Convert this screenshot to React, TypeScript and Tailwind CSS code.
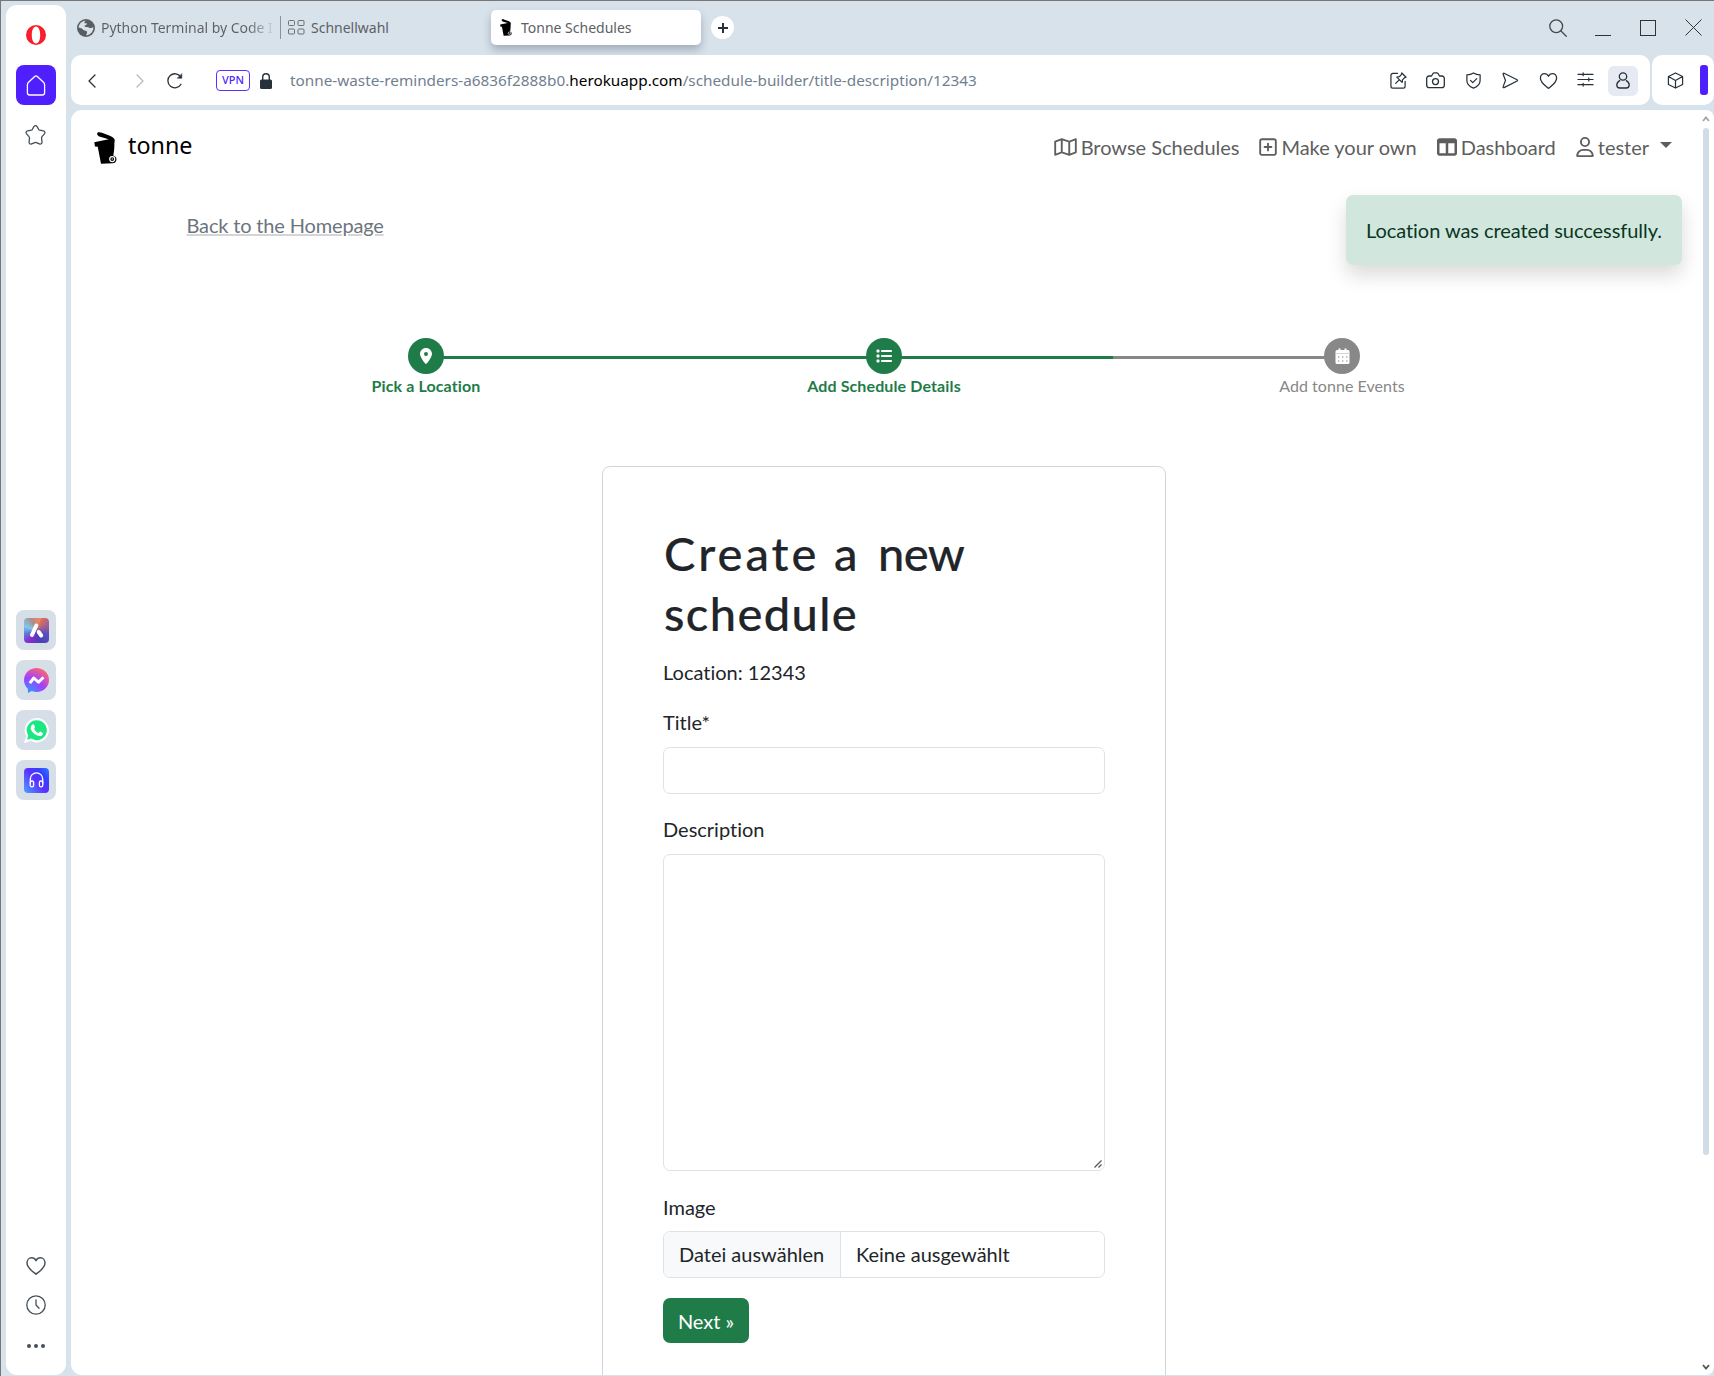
import React from "react";
import {
  FaRegMap,
  FaRegSquarePlus,
  FaTableColumns,
  FaRegUser,
  FaLocationDot,
  FaList,
} from "react-icons/fa6";

function BinIcon({ className }: { className: string }) {
  return (
    <svg viewBox="0 0 24 33" className={className} fill="currentColor">
      <path d="M3.600.600C5-.2 7 .2 9 .9l7.500 2.800c3 1.200 5 2.600 5.200 4.800L21.200 12c.3 4-.4 8-1 12.500a4 4 0 0 1 3.200 4.200c-.2 2.400-2 3.700-4 3.700L7.300 33 3.900 15.200 1 15 .3 10.400l15-3L5.500 4.500C3.600 3.900 2.800 1.800 3.600.600Z" />
      <circle cx="19" cy="28" r="2.600" fill="none" stroke="#fff" strokeWidth="1.300" />
      <circle cx="19" cy="28" r="0.700" fill="#fff" />
    </svg>
  );
}

function CalendarIcon() {
  return (
    <svg viewBox="0 0 15 16" className="h-4 w-[15px]">
      <path fill="#fff" d="M3.500.5h2V2h4V.5h2V2H13a1.500 1.500 0 0 1 1.500 1.500v11A1.500 1.500 0 0 1 13 16H2a1.500 1.500 0 0 1-1.500-1.500v-11A1.500 1.500 0 0 1 2 2h1.500Z" />
      <path stroke="#d6d6d6" d="M.5 5.500h14" />
      <path stroke="#777" strokeWidth="1.200" strokeDasharray="1.200 2.900" d="M3 9h9.500M3 13h9.500" />
    </svg>
  );
}

function Line({ children, className = "size-[18px]", box = "0 0 18 18" }: { children: React.ReactNode; className?: string; box?: string }) {
  return (
    <svg viewBox={box} className={className} fill="none" stroke="currentColor" strokeWidth="1.3" strokeLinecap="round" strokeLinejoin="round">
      {children}
    </svg>
  );
}

const heart = "M9 16.300C6.500 14.200.9 10.800.9 6.200.9 3.300 2.900 1.600 5 1.600c1.800 0 3.200 1 4 2.600.8-1.600 2.200-2.600 4-2.600 2.100 0 4.100 1.700 4.100 4.600 0 4.600-5.600 8-8.100 10.100Z";

function Sidebar() {
  return (
    <aside className="flex w-[60px] shrink-0 flex-col items-center rounded-[11px] bg-white text-[#454f5a]">
      <svg viewBox="0 0 20 20" className="mt-5 size-5">
        <path fillRule="evenodd" fill="#fa1e2d" d="M10 0a10 10 0 1 0 0 20 10 10 0 0 0 0-20Zm0 1.500c2.600 0 4.200 3.600 4.200 8.500s-1.600 8.500-4.200 8.500S5.800 14.900 5.800 10 7.400 1.500 10 1.500Z" />
      </svg>
      <div className="mt-5 flex size-10 items-center justify-center rounded-lg bg-[#4f1fff] text-white">
        <Line className="h-[21px] w-5" box="0 0 20 21">
          <path d="M2.500 7.200 8.700 1.500c.8-.7 1.800-.7 2.600 0l6.200 5.700c.7.700 1.100 1.500 1.100 2.500v8a2.300 2.300 0 0 1-2.300 2.300H3.700a2.300 2.300 0 0 1-2.300-2.300v-8c0-1 .4-1.800 1.100-2.500Z" />
        </Line>
      </div>
      <Line className="mt-5 mr-px h-5 w-[21px]" box="0 0 21 20">
        <path d="M8.900 1.600c.7-1.200 2.500-1.200 3.200 0l1.500 2.700c.3.500.7.800 1.200.9l3.600.7c1.500.3 2 1.900 1 3l-2.400 2.700c-.3.400-.5.900-.4 1.400l.4 4c.1 1.500-1.200 2.500-2.600 1.900l-3.100-1.300c-.5-.2-1-.2-1.500 0l-3.200 1.300c-1.400.6-2.700-.4-2.500-1.900l.4-4c0-.5-.1-1-.5-1.400L1.600 8.900c-1-1.100-.5-2.700 1-3l3.600-.7c.5-.1.900-.4 1.200-.9Z" />
      </Line>

      <div className="mt-[465px] flex flex-col gap-2.5">
        <div className="flex size-10 items-center justify-center rounded-lg bg-[#d6dfe8]">
          <div className="flex size-[25px] items-center justify-center rounded bg-[conic-gradient(from_20deg,#e0705f,#5a4fc0_25%,#4b3fb8_40%,#8a2bd0_55%,#5a7be0_65%,#7ccbe8_75%,#b08a90_88%,#f08a55)]">
            <svg viewBox="0 0 25 25" className="size-[25px]" stroke="#fff" strokeLinecap="round" fill="none">
              <path strokeWidth="4" d="M12.300 7.500 8 17" />
              <path strokeWidth="4" d="m14.700 14 2.500 3.500" />
            </svg>
          </div>
        </div>
        <div className="flex size-10 items-center justify-center rounded-lg bg-[#d6dfe8]">
          <svg viewBox="0 0 25 25" className="size-[25px]">
            <defs>
              <radialGradient id="msg" cx="0.2" cy="1" r="1.1">
                <stop offset="0" stopColor="#2f9bff" />
                <stop offset="0.550" stopColor="#a040ff" />
                <stop offset="1" stopColor="#ff6670" />
              </radialGradient>
            </defs>
            <path fill="url(#msg)" d="M12.500 0C5.500 0 0 5.100 0 12c0 3.600 1.500 6.700 3.900 8.900V25l3.900-2.100c1.500.7 3 1.100 4.700 1.100 7 0 12.500-5.100 12.500-12S19.500 0 12.500 0Z" />
            <path fill="none" stroke="#fff" strokeWidth="3" strokeLinejoin="round" d="m5.800 15.200 4-5.200 4.700 4.200 5-5" />
          </svg>
        </div>
        <div className="flex size-10 items-center justify-center rounded-lg bg-[#d6dfe8]">
          <svg viewBox="0 0 25 25" className="size-[25px]">
            <path fill="#fff" d="M12.800 0a12.200 12.200 0 0 0-10.600 18.200L0 25l7-2A12.200 12.200 0 1 0 12.800 0Z" />
            <path fill="#1de782" d="M12.800 2.200A10 10 0 0 0 4.300 17.500l-1.200 4.200 4.300-1.100A10 10 0 1 0 12.800 2.200Z" />
            <path fill="#fff" d="M8.500 6.500c.5-.4 1.300-.3 1.500.3l1 2.300c.2.500-.8 1.500-.9 1.900 1 2 2.500 3.300 4.500 4.100.5-.3 1.100-1.600 1.600-1.500l2.600 1.300c.3.600 0 2-.9 2.600-1.500 1-3.300.7-5.300-.2-3.200-1.500-5.700-4.700-5.900-7 0-1.600.8-3 1.800-3.800Z" />
          </svg>
        </div>
        <div className="flex size-10 items-center justify-center rounded-lg bg-[#d6dfe8]">
          <div className="flex size-[25px] items-center justify-center rounded bg-[linear-gradient(50deg,#4ba3ff,#5a2fff_50%,#3540ff_75%,#2b80ff)] text-white">
            <Line className="h-4 w-[15px]" box="0 0 15 16">
              <path d="M1.300 11V7a6.200 6.200 0 0 1 12.400 0v4" />
              <rect x="1.200" y="9" width="3.400" height="5.800" rx="1.600" />
              <rect x="10.400" y="9" width="3.400" height="5.800" rx="1.600" />
            </Line>
          </div>
        </div>
      </div>

      <Line className="mt-auto mr-px mb-[20px] h-[19px] w-5" box="0 0 18 17"><path d={heart} /></Line>
      <Line className="mr-px mb-[29px] size-5" box="0 0 20 20">
        <circle cx="10" cy="10" r="9.200" />
        <path d="M10 5v5l3 3.200" />
      </Line>
      <div className="mb-[27px] flex gap-[3px]">
        <i className="size-1 rounded-full bg-[#454f5a]" />
        <i className="size-1 rounded-full bg-[#454f5a]" />
        <i className="size-1 rounded-full bg-[#454f5a]" />
      </div>
    </aside>
  );
}

function TabBar() {
  return (
    <div className="flex h-[50px] shrink-0 items-center pb-[5px] pl-1.5 font-['Noto_Sans'] text-[14px] text-[#5c6165]">
      <svg viewBox="0 0 18 18" className="size-[18px] shrink-0">
        <circle cx="9" cy="9" r="9" fill="#5a5e61" />
        <path fill="#d8e2eb" d="M10 1.600c-2 .3-3 1.200-2.500 2.600.6.400 1.900-.3 2.500.5.300 1-1.500 1.100-2.300 2-.4 1 .8 1.400 2.100 1.300 1.800-.1 2.300 1 3.600 1.100 1 .1 2-1.100 3-.6A7.600 7.600 0 0 1 9.500 16.400c-.7-1.500.9-2.200.6-3.500-.5-1.400-2.600-.8-3.600-1.800C5.500 10 4.500 9 1.600 8.500 2 4.500 5.500 1.400 10 1.600Z" />
      </svg>
      <div className="ml-1.5 w-[173px] bg-[linear-gradient(90deg,#5c6165_85%,#5c616530_98%)] bg-clip-text tracking-[-0.020px] whitespace-nowrap text-transparent">Python Terminal by Code I</div>
      <div className="ml-1.5 h-[23px] w-px bg-[#8b9298]" />
      <svg viewBox="0 0 17 15" className="ml-[7px] h-[15px] w-[17px] fill-none stroke-[#6a6f73]">
        <rect x=".5" y=".5" width="6" height="5" rx="1" />
        <rect x="10" y=".5" width="6" height="5" rx="1" />
        <rect x=".5" y="9" width="6" height="5" rx="1" />
        <rect x="10" y="9" width="6" height="5" rx="1" />
      </svg>
      <div className="ml-1.5 w-[180px]">Schnellwahl</div>
      <div className="flex h-[35px] w-[210px] items-center rounded-[5px] bg-white pl-[9px] shadow-[0_5px_8px_rgba(60,75,95,0.35)]">
        <BinIcon className="h-[17px] w-3 text-black" />
        <span className="ml-[9px]">Tonne Schedules</span>
      </div>
      <div className="ml-2.5 flex size-[23px] items-center justify-center rounded-full bg-white text-[#26313b]">
        <svg viewBox="0 0 10 10" className="size-2.5" stroke="currentColor" strokeWidth="2"><path d="M5 0v10M0 5h10" /></svg>
      </div>
      <div className="ml-auto flex items-center gap-[29px] pr-3 text-[#44484c]">
        <Line className="-mr-px size-[18px]"><circle cx="7.200" cy="7.200" r="6.400" /><path d="m12 12 5.300 5.300" /></Line>
        <div className="h-4 w-4 border-b border-[#333]" />
        <div className="size-4 border border-[#333]" />
        <svg viewBox="0 0 17 17" className="size-[17px] stroke-[#333]"><path d="m.5.5 16 16m0-16-16 16" /></svg>
      </div>
    </div>
  );
}

function AddressBar() {
  return (
    <div className="flex h-[50px] shrink-0 gap-0.5 text-[#26313b]">
      <div className="flex flex-1 items-center rounded-[10px] bg-white pt-px pr-2">
        <Line className="ml-[17px] h-3.5 w-2" box="0 0 8 14"><path d="M7 1 1 7l6 6" /></Line>
        <Line className="ml-10 h-3.5 w-2 text-[#b5babf]" box="0 0 8 14"><path d="m1 1 6 6-6 6" /></Line>
        <Line className="ml-[23px] size-4" box="0 0 16 16">
          <path d="M14 11.200A7 7 0 1 1 13.800 4" />
          <path d="M14.800 1v4.200h-4.200Z" fill="currentColor" strokeWidth=".6" />
        </Line>
        <div className="ml-[33px] flex h-[21px] w-[34px] items-center justify-center rounded border-[1.5px] border-[#5a2fff] font-['Noto_Sans'] text-[11px] font-medium text-[#4f1fff]">VPN</div>
        <svg viewBox="0 0 12 16" className="ml-[10px] h-4 w-3">
          <path fill="none" stroke="currentColor" strokeWidth="1.400" d="M2.700 8V4a3.300 3.300 0 0 1 6.600 0v4" />
          <rect y="6.500" width="12" height="9.500" rx="1.500" fill="currentColor" />
        </svg>
        <div className="ml-[18px] font-['Noto_Sans'] text-[15.3px] whitespace-nowrap text-[#71808f]">
          tonne-waste-reminders-a6836f2888b0.<span className="text-black">herokuapp.com</span>/schedule-builder/title-description/12343
        </div>
        <div className="ml-auto grid grid-cols-[repeat(7,37.5px)] items-center justify-items-center">
          <Line className="size-[17px]">
            <path d="M8 1.500H3a2 2 0 0 0-2 2v11.500a2 2 0 0 0 2 2h11a2 2 0 0 0 2-2v-5" />
            <path d="m12.500 1 4.500 4.500-1.500.4-2.300 2.400-.4 2.700-5.600-5.600 2.600-.4L12 2.700ZM9.500 8.600 6 12" />
          </Line>
          <Line className="h-[17px] w-[19px]" box="0 0 19 17">
            <path d="M3 4h2.500L7 1.500c.3-.5.800-.7 1.300-.7h2.400c.5 0 1 .2 1.300.7L13.500 4H16a2.300 2.300 0 0 1 2.300 2.300v7A2.300 2.300 0 0 1 16 15.600H3a2.300 2.300 0 0 1-2.300-2.300v-7A2.300 2.300 0 0 1 3 4Z" />
            <circle cx="9.500" cy="9.600" r="3" />
          </Line>
          <Line className="size-[17px]">
            <path d="M9 1c2 1.400 4.200 2 7 2v6c0 3.800-3 6.500-7 8-4-1.500-7-4.200-7-8V3c2.800 0 5-.6 7-2Z" />
            <path d="m5.800 8.800 2.400 2.400 4.200-4.200" />
          </Line>
          <Line className="size-[17px]"><path d="M2.200 1.400 16 8.200c.6.300.6 1 0 1.300L2.200 16.500c-.7.300-1.300-.3-1-1L3.700 9 1.200 2.400c-.3-.7.300-1.300 1-1Z" /></Line>
          <Line className="h-[18px] w-[19px]"><path d={heart} /></Line>
          <Line className="mb-0.5 size-[17px]"><path d="M1 3.500h16M1 9h16M1 14.500h16M6.500 2v3M12.500 7.500v3M6.500 13v3" /></Line>
          <div className="flex size-[30px] items-center justify-center rounded-md bg-[#e6ebf3]">
            <Line className="h-[17px] w-3.5" box="0 0 14 17">
              <circle cx="7" cy="4.500" r="3.700" />
              <path d="M3.700 8.600C1.900 9.600.8 11.300.8 13c0 2 1.200 3 3 3h6.400c1.800 0 3-1 3-3 0-1.700-1.100-3.400-2.900-4.400" />
            </Line>
          </div>
        </div>
      </div>
      <div className="flex w-[62px] items-center justify-between rounded-[10px] bg-white pr-1.5 pl-[14.500px]">
        <Line className="size-[17px]">
          <path d="M9 1 1.500 4.800v8.400L9 17l7.500-3.800V4.800ZM1.500 4.800 9 9l7.500-4.200M9 9v8" />
        </Line>
        <div className="h-[30px] w-2 rounded-[3px] bg-[#4f1fff]" />
      </div>
    </div>
  );
}

function Navbar() {
  return (
    <nav className="flex items-center text-[20px] leading-[30px] text-[#5e5e5e]">
      <BinIcon className="h-8 w-[23px] text-black" />
      <div className="-mt-1.5 ml-[11px] font-['Noto_Sans'] text-[23.3px] text-black">tonne</div>
      <div className="-mt-0.5 ml-auto flex gap-5 tracking-[-0.020px]">
        <div className="flex items-center gap-1"><FaRegMap className="h-5 w-[23px]" />Browse Schedules</div>
        <div className="flex items-center gap-1"><FaRegSquarePlus className="h-5 w-[18px]" />Make your own</div>
        <div className="flex items-center gap-1"><FaTableColumns className="size-5" />Dashboard</div>
        <div className="flex items-center gap-1">
          <FaRegUser className="h-5 w-[18px]" />tester
          <i className="mb-1 ml-[7px] border-x-[6px] border-t-[6px] border-x-transparent border-t-[#5e5e5e]" />
        </div>
      </div>
    </nav>
  );
}

function Step({ icon, label, done }: { icon: React.ReactNode; label: string; done?: boolean }) {
  return (
    <div className={done ? "z-10 flex w-40 flex-col items-center font-bold tracking-[0.120px] text-[#1f7c48]" : "z-10 flex w-40 flex-col items-center tracking-[0.050px] text-[#888]"}>
      <div className={done ? "flex size-9 items-center justify-center rounded-full bg-[#1f7c48] text-white" : "flex size-9 items-center justify-center rounded-full bg-[#888] text-white"}>{icon}</div>
      <div className="text-[16px] leading-6 whitespace-nowrap">{label}</div>
    </div>
  );
}

function Stepper() {
  return (
    <div className="relative mx-auto mt-[98px] flex w-[1076px] justify-between">
      <div className="absolute top-[18px] right-20 left-20 flex h-[3px] bg-[#888]">
        <div className="w-[75%] bg-[#1f7c48]" />
      </div>
      <Step done icon={<FaLocationDot className="size-4" />} label="Pick a Location" />
      <Step done icon={<FaList className="size-4" />} label="Add Schedule Details" />
      <Step icon={<CalendarIcon />} label="Add tonne Events" />
    </div>
  );
}

function ScheduleForm() {
  return (
    <div className="mx-auto mt-[68px] h-[1000px] w-[564px] rounded-[8px] border border-[#d3d4d5] p-[60px] text-[20px] leading-[30px] text-[#212529]">
      <h1 className="-mt-1 pl-px text-[47px] leading-[60px] font-medium [-webkit-text-stroke:0.2px_#212529]">
        <span className="flex">
          <span className="w-[170px] tracking-[3px]">Create</span>
          <span className="w-[44px]">a</span>
          <span className="tracking-[-0.600px]">new</span>
        </span>
        <span className="block tracking-[1.400px]">schedule</span>
      </h1>
      <p className="mt-3.5">Location: 12343</p>
      <div className="mt-5">Title*</div>
      <div className="mt-2.5 h-[47px] rounded-[7px] border border-[#dee2e6]" />
      <div className="mt-5">Description</div>
      <div className="mt-2.5 flex h-[317px] items-end justify-end rounded-[7px] border border-[#dee2e6] p-0.5">
        <svg viewBox="0 0 8 8" className="size-2 stroke-[#555]" strokeWidth="1.300"><path d="M.5 7.500l7-7M4.500 7.500l3-3" /></svg>
      </div>
      <div className="mt-[21px]">Image</div>
      <div className="mt-[9px] flex h-[47px] overflow-hidden rounded-[7px] border border-[#dee2e6] leading-[45px]">
        <div className="w-[177px] border-r border-[#dee2e6] bg-[#f8f9fa] pl-[15px]">Datei auswählen</div>
        <div className="pl-[15px]">Keine ausgewählt</div>
      </div>
      <div className="mt-5 flex h-[45px] w-[86px] items-center justify-center rounded-[7px] bg-[#1f7c48] text-white">Next »</div>
    </div>
  );
}

function Page() {
  return (
    <div className="relative mt-[5px] min-h-0 flex-1 overflow-hidden rounded-l-[11px] rounded-r-[8px] bg-white font-['Lato'] [font-variant-ligatures:none]">
      <div className="h-full w-[1626px] pt-[22px]">
        <div className="pr-[25px] pl-[23px]"><Navbar /></div>
        <div className="mt-[46px] ml-[115.5px] text-[20px] leading-[30px] tracking-[-0.160px] text-[#6c757d] underline decoration-[#6c757d]/30 decoration-2">Back to the Homepage</div>
        <Stepper />
        <ScheduleForm />
      </div>
      <div className="absolute top-[85px] right-8 flex h-[70px] w-[336px] items-center rounded-[7px] bg-[#d1e7dd] pl-5 text-[20px] tracking-[-0.060px] text-[#0a3622] shadow-[0_10px_20px_rgba(0,0,0,0.15)]">Location was created successfully.</div>
      <div className="absolute top-1.5 right-1 flex w-2 flex-col items-center">
        <svg viewBox="0 0 8 6" className="h-1.5 w-2 fill-none stroke-[#a5a5a5]" strokeWidth="1.800"><path d="m1 5 3-3.500L7 5" /></svg>
        <div className="mt-1.5 h-[1027px] w-1.5 rounded-full bg-[#d0dce6]" />
        <svg viewBox="0 0 8 6" className="mt-[209px] h-1.5 w-2 fill-none stroke-[#555]" strokeWidth="1.800"><path d="m1 1 3 3.500L7 1" /></svg>
      </div>
    </div>
  );
}

export default function App() {
  return (
    <div className="flex h-[1376px] w-[1714px] gap-[5px] overflow-hidden border-t border-l border-[#777] bg-[#d8e2eb] pt-1 pb-px pl-[5px]">
      <Sidebar />
      <div className="flex min-w-0 flex-1 flex-col">
        <TabBar />
        <AddressBar />
        <Page />
      </div>
    </div>
  );
}
